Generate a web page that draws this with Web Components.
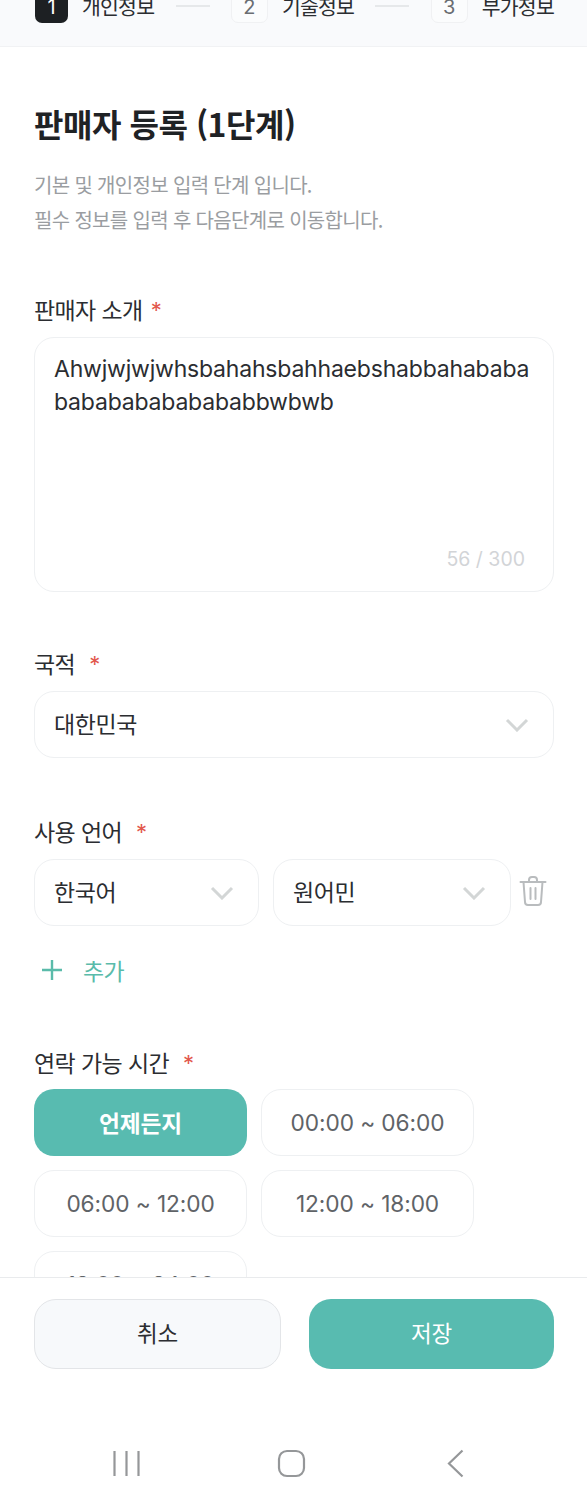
<!DOCTYPE html>
<html lang="ko"><head><meta charset="utf-8"><style>
html,body{margin:0;padding:0;background:#fff}
body{font-family:"Noto Sans CJK KR","Inter",sans-serif;color:#26282b;width:587px;height:1504px;overflow:hidden}
</style></head><body>
<app-page>
  <step-bar slot="top">
    <step-item n="1" active>개인정보</step-item><step-line></step-line>
    <step-item n="2">기술정보</step-item><step-line></step-line>
    <step-item n="3">부가정보</step-item>
  </step-bar>
  <page-heading title="판매자 등록 (1단계)">
    <span>기본 및 개인정보 입력 단계 입니다.</span>
    <span>필수 정보를 입력 후 다음단계로 이동합니다.</span>
  </page-heading>
  <form-field label="판매자 소개" style="margin-top:57px">
    <text-box count="56 / 300">Ahwjwjwjwhsbahahsbahhaebshabbahababababababababababbwbwb</text-box>
  </form-field>
  <form-field label="국적" style="margin-top:56px" star="14">
    <select-box>대한민국</select-box>
  </form-field>
  <form-field label="사용 언어" style="margin-top:58px" star="14">
    <lang-row>
      <select-box style="width:225px">한국어</select-box>
      <select-box style="width:238px">원어민</select-box>
      <trash-icon></trash-icon>
    </lang-row>
    <add-link>추가</add-link>
  </form-field>
  <form-field label="연락 가능 시간" style="margin-top:62px" star="14">
    <time-grid>
      <time-chip on>언제든지</time-chip>
      <time-chip>00:00 ~ 06:00</time-chip>
      <time-chip>06:00 ~ 12:00</time-chip>
      <time-chip>12:00 ~ 18:00</time-chip>
      <time-chip>18:00 ~ 24:00</time-chip>
    </time-grid>
  </form-field>
  <action-bar slot="bottom"></action-bar>
  <nav-bar slot="bottom"></nav-bar>
</app-page>
<script>
function def(name,html){
  customElements.define(name,class extends HTMLElement{
    connectedCallback(){
      if(this.shadowRoot)return;
      const r=this.attachShadow({mode:'open'});
      r.innerHTML=typeof html==='function'?html(this):html;
    }
  });
}
def('app-page',`<style>
:host{display:flex;flex-direction:column;width:587px;height:1504px;overflow:hidden;background:#fff}
main{flex:1;min-height:0;overflow:hidden;padding:0 33px 0 34px}
</style><slot name="top"></slot><main><slot></slot></main><slot name="bottom"></slot>`);
def('step-bar',`<style>
:host{display:flex;align-items:flex-end;height:46px;flex:none;padding:0 33px 0 35px;background:#f9fafc;border-bottom:1px solid #f1f2f4;overflow:hidden}
div{display:flex;align-items:center;height:33px;margin-bottom:23px;flex:1;justify-content:space-between}
</style><div><slot></slot></div>`);
def('step-item',h=>`<style>
:host{display:flex;align-items:center;gap:14px;font-size:20.500px;color:#2b2d31;letter-spacing:-.8px;white-space:nowrap}
span{position:relative;top:-1px}
b{display:flex;align-items:center;justify-content:center;width:33px;height:33px;border-radius:7px;font:400 20px Inter,sans-serif;letter-spacing:0;box-sizing:border-box;
 ${h.hasAttribute('active')?'background:#1d2023;color:#fff;':'background:#fbfcfd;border:1px solid #f0f1f3;color:#6a6d72;width:37px;'}}
</style><b>${h.getAttribute('n')}</b><span><slot></slot></span>`);
def('step-line',`<style>:host{display:block;width:34px;height:2px;background:#e6e8ea;margin-top:-2px}</style>`);
def('page-heading',h=>`<style>
:host{display:block;padding-top:54px}
h1{margin:0;font-size:32px;line-height:45px;font-weight:700;color:#1f2225;letter-spacing:-.45px}
div{margin-top:22px;display:flex;flex-direction:column;font-size:20px;line-height:34.500px;color:#9a9da1;letter-spacing:-.67px}
</style><h1>${h.getAttribute('title')}</h1><div><slot></slot></div>`);
def('form-field',h=>`<style>
:host{display:block}
label{display:flex;height:30px;align-items:center;font-size:23px;color:#2b2d31;letter-spacing:-.6px;margin-bottom:13px}
i{font-style:normal;color:#e2574c;margin-left:${h.getAttribute('star')||8}px;font:400 22px Inter,sans-serif;position:relative;top:1px}
</style><label>${h.getAttribute('label')}<i>*</i></label><slot></slot>`);
def('text-box',h=>`<style>
:host{display:block;box-sizing:border-box;height:255px;width:520px;border:1px solid #eef0f2;border-radius:20px;padding:15px 19px;position:relative;font:400 23px/33px Inter,"Noto Sans CJK KR",sans-serif;color:#2b2d31;word-break:break-all;letter-spacing:-.2px}
span{position:absolute;right:28px;bottom:18px;font-size:19.500px;line-height:28px;color:#d2d4d7;letter-spacing:0}
</style><slot></slot><span>${h.getAttribute('count')}</span>`);
def('select-box',`<style>
:host{display:flex;box-sizing:border-box;align-items:center;justify-content:space-between;height:67px;width:520px;border:1px solid #eef0f2;border-radius:20px;padding:0 24px 0 19px;font-size:23px;color:#2b2d31;letter-spacing:-.4px;flex:none}
span{position:relative;top:-2px}
svg{width:24px;height:14px;fill:none;stroke:#d3d6d6;stroke-width:3}
</style><span><slot></slot></span><svg viewBox="0 0 24 14"><path d="M2 2l10 10L22 2"/></svg>`);
def('lang-row',`<style>:host{display:flex;align-items:center;gap:14px;width:530px}</style><slot></slot>`);
def('trash-icon',`<style>:host{display:block;margin-left:-6px;width:28px;height:32px}svg{display:block;margin-top:-2px;fill:none;stroke:#b9bcbe;stroke-width:2;stroke-linecap:round;stroke-linejoin:round}</style>
<svg width="28" height="32" viewBox="0 0 28 32"><path d="M1.500 7h25M10 7V5a3 3 0 0 1 3-3h2a3 3 0 0 1 3 3v2M4.500 7l1.500 20a3 3 0 0 0 3 3h10a3 3 0 0 0 3-3L23.500 7M11.500 13v11M16.500 13v11"/></svg>`);
def('add-link',`<style>
:host{display:flex;align-items:center;gap:20px;height:30px;margin:29px 0 0 7px;font-size:23px;color:#5abbaa;letter-spacing:-.6px}
svg{width:22px;height:22px;stroke:#5abbaa;stroke-width:2.400;fill:none}
</style><svg viewBox="0 0 22 22"><path d="M11 1v20M1 11h20"/></svg><slot></slot>`);
def('time-grid',`<style>:host{display:grid;grid-template-columns:213px 213px;column-gap:14px;row-gap:14px;margin-top:-1px}</style><slot></slot>`);
def('time-chip',h=>`<style>
:host{display:flex;box-sizing:border-box;align-items:center;justify-content:center;height:67px;border-radius:20px;font:400 22.700px Inter,"Noto Sans CJK KR",sans-serif;letter-spacing:-.1px;
 ${h.hasAttribute('on')?'background:#58bbb0;color:#fff;font-weight:700;':'border:1px solid #eef0f2;color:#5f6367;'}}
</style><slot></slot>`);
def('action-bar',`<style>
:host{display:flex;gap:28px;flex:none;background:#fff;border-top:1px solid #e9ebed;padding:21px 33px 0 34px;height:118px}
button{flex:1;height:70px;border-radius:22px;font:400 22.500px "Noto Sans CJK KR",sans-serif;letter-spacing:-.3px;padding:0 0 5px;box-sizing:border-box}
.c{background:#f7f9fb;border:1.500px solid #e3e5e8;color:#2b2d31}
.s{background:#58bbb0;border:0;color:#fff}
</style><button class="c">취소</button><button class="s">저장</button>`);
def('nav-bar',`<style>
:host{display:flex;flex:none;height:87px;box-sizing:border-box;padding:32px 0 0 112px;gap:134px;align-items:flex-start;background:#fff}
svg{display:block;flex:none;fill:none;stroke:#959799;stroke-width:2.200}
</style>
<svg width="30" height="30" viewBox="0 0 30 30"><path d="M2.500 2v25M14.500 2v25M26.500 2v25"/></svg>
<svg width="30" height="30" viewBox="0 0 30 30"><rect x="3" y="2" width="25" height="25" rx="8"/></svg>
<svg width="30" height="30" viewBox="0 0 30 30"><path d="M22.500 1.500L9 14.500l13.500 13"/></svg>`);
</script>
</body></html>
